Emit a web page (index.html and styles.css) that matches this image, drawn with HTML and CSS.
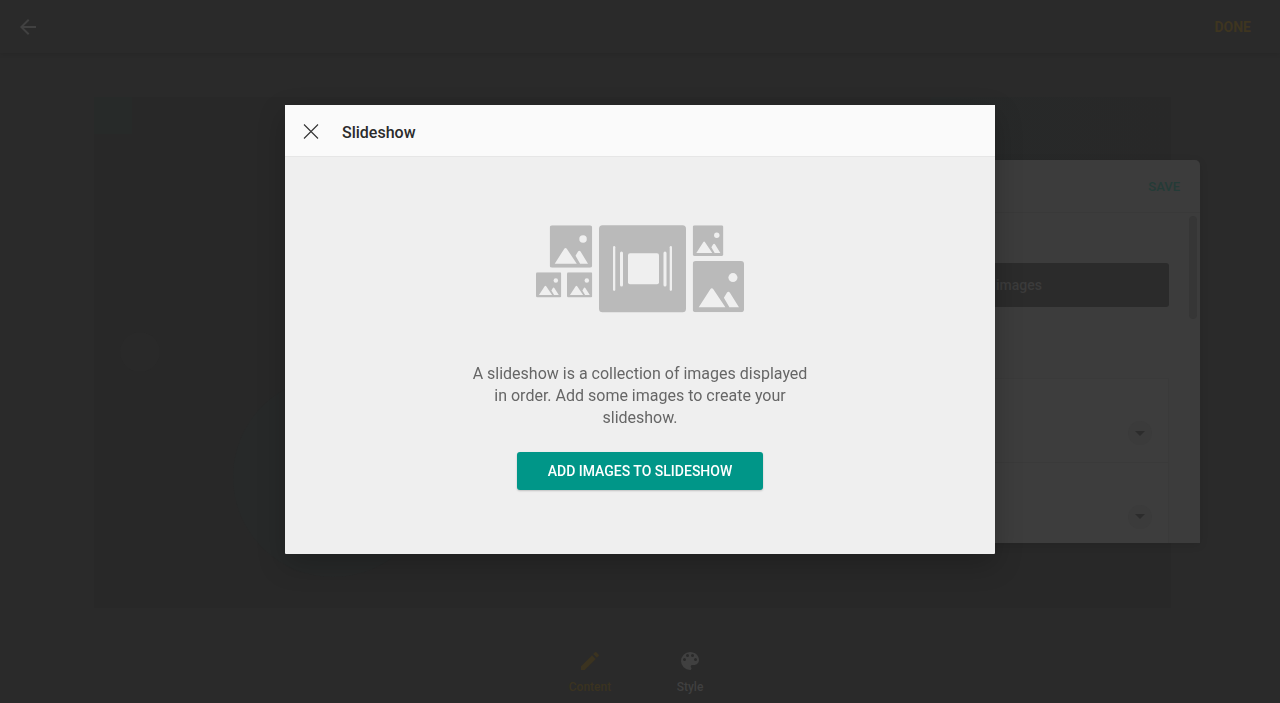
FILE: index.html
```html
<!DOCTYPE html>
<html lang="en">
<head>
<meta charset="utf-8">
<meta name="viewport" content="width=device-width, initial-scale=1">
<title>Slideshow</title>
<link rel="stylesheet" href="styles.css">
</head>
<body>
<div class="app">
  <header class="topbar">
    <button class="back" type="button" aria-label="Back">
      <svg width="24" height="24" viewBox="0 0 24 24" fill="currentColor"><path d="M20 11H7.8l5.6-5.6L12 4l-8 8 8 8 1.4-1.4L7.8 13H20z"/></svg>
    </button>
    <button class="done" type="button">DONE</button>
  </header>
  <main class="stage">
    <div class="canvas">
      <span class="canvas-tag"></span>
      <span class="canvas-glow"></span>
      <span class="canvas-prev"></span>
      <span class="canvas-disc"></span>
    </div>
  </main>
  <nav class="tabs">
    <button class="tab tab-active" type="button">
      <svg width="24" height="24" viewBox="0 0 24 24" fill="currentColor"><path d="M3 17.250V21h3.750L17.810 9.940l-3.750-3.750zM20.710 7.040a1 1 0 0 0 0-1.410l-2.340-2.340a1 1 0 0 0-1.410 0l-1.830 1.830 3.750 3.750z"/></svg>
      <span>Content</span>
    </button>
    <button class="tab" type="button">
      <svg width="24" height="24" viewBox="0 0 24 24" fill="currentColor"><path d="M12 3a9 9 0 0 0 0 18c.83 0 1.500-.67 1.500-1.500 0-.39-.15-.74-.39-1.010-.23-.26-.38-.61-.38-.99 0-.83.67-1.500 1.500-1.500H16c2.760 0 5-2.240 5-5 0-4.420-4.030-8-9-8zm-5.500 9a1.500 1.500 0 1 1 0-3 1.500 1.500 0 0 1 0 3zm3-4a1.500 1.500 0 1 1 0-3 1.500 1.500 0 0 1 0 3zm5 0a1.500 1.500 0 1 1 0-3 1.500 1.500 0 0 1 0 3zm3 4a1.500 1.500 0 1 1 0-3 1.500 1.500 0 0 1 0 3z"/></svg>
      <span>Style</span>
    </button>
  </nav>
</div>

<aside class="panel">
  <div class="panel-head"><button class="save" type="button">SAVE</button></div>
  <div class="panel-body">
    <div class="panel-content">
      <button class="images" type="button">images</button>
      <div class="options">
        <div class="option">
          <button class="expand" type="button" aria-label="Expand first option"><svg width="10" height="5" viewBox="0 0 10 5" fill="currentColor"><path d="M0 0h10L5 5z"/></svg></button>
        </div>
        <div class="option">
          <button class="expand" type="button" aria-label="Expand second option"><svg width="10" height="5" viewBox="0 0 10 5" fill="currentColor"><path d="M0 0h10L5 5z"/></svg></button>
        </div>
      </div>
    </div>
    <div class="scroll-track"><span class="scroll-thumb"></span></div>
  </div>
</aside>

<div class="overlay">
  <section class="dialog" role="dialog" aria-modal="true" aria-labelledby="dialog-title">
    <header class="dialog-head">
      <button class="close" type="button" aria-label="Close">
        <svg width="16" height="16" viewBox="0 0 16 16" fill="none" stroke="currentColor" stroke-width="1.100"><path d="M1 0.500l14 14M15 0.500L1 14.500"/></svg>
      </button>
      <h1 class="dialog-title" id="dialog-title">Slideshow</h1>
    </header>
    <div class="dialog-body">
      <svg class="art" width="208" height="88" viewBox="0 0 208 88" aria-hidden="true">
        <defs>
          <symbol id="photo" viewBox="0 0 51 51">
            <rect width="51" height="51" rx="3" fill="#bababa"/>
            <circle cx="40" cy="16.500" r="4.500" fill="#efefef"/>
            <path d="M6 46L17.500 28.200Q19 26 20.500 28.200L32.500 46zM31 36.500l3-5q1.500-1.800 3 0L46 46h-9.500z" fill="#efefef"/>
          </symbol>
        </defs>
        <use href="#photo" x="13.700" y="0.300" width="42.500" height="42.500"/>
        <use href="#photo" x="0" y="47.300" width="25.300" height="25.300"/>
        <use href="#photo" x="31" y="47.300" width="25.300" height="25.300"/>
        <rect x="63" y="0.300" width="87" height="87" rx="3.500" fill="#bababa"/>
        <g fill="#efefef">
          <rect x="77" y="21" width="2.300" height="45" rx="1.150"/>
          <rect x="84" y="26.500" width="3" height="35" rx="1.500"/>
          <rect x="92" y="28.300" width="31" height="31" rx="2"/>
          <rect x="127.500" y="26.500" width="3" height="35" rx="1.500"/>
          <rect x="133.700" y="21" width="2.300" height="45" rx="1.150"/>
        </g>
        <use href="#photo" x="156.700" y="0.300" width="30.700" height="30.700"/>
        <use href="#photo" x="156.700" y="36" width="51.300" height="51.300"/>
      </svg>
      <p class="message">A slideshow is a collection of images displayed in order. Add some images to create your slideshow.</p>
      <button class="add" type="button">ADD IMAGES TO SLIDESHOW</button>
    </div>
  </section>
</div>
</body>
</html>
```
FILE: styles.css
```css
* { box-sizing: border-box; }

body {
  margin: 0;
  background: #2a2a2a;
  font-family: Roboto, "Liberation Sans", sans-serif;
}

button {
  margin: 0;
  padding: 0;
  border: 0;
  background: none;
  color: inherit;
  font: inherit;
}

svg { display: block; }

.app {
  display: flex;
  flex-direction: column;
  height: 100vh;
}

.topbar {
  display: flex;
  align-items: center;
  justify-content: space-between;
  height: 53px;
  padding: 0 29px 0 16px;
  box-shadow: 0 1px 3px #272727;
}

.back { color: #414141; }

.done {
  color: #3e3520;
  font-size: 14px;
  font-weight: 700;
}

.stage {
  flex: 1;
  display: flex;
  padding: 44px 109px 34px 94px;
}

.canvas {
  position: relative;
  flex: 1;
  overflow: hidden;
  background: #282828;
}

.canvas-tag,
.canvas-glow,
.canvas-prev,
.canvas-disc { position: absolute; }

.canvas-tag {
  top: 0;
  left: 0;
  width: 38px;
  height: 37px;
  background: #272a29;
}

.canvas-glow {
  top: 0;
  right: 0;
  width: 240px;
  height: 64px;
  background: linear-gradient(to right, #272929, #282828);
}

.canvas-prev {
  top: 235px;
  left: 26px;
  width: 40px;
  height: 40px;
  border-radius: 50%;
  background: #292929;
}

.canvas-disc {
  top: 280px;
  left: 139px;
  width: 200px;
  height: 200px;
  border-radius: 50%;
  background: #272929;
}

.tabs {
  display: flex;
  justify-content: center;
  height: 61px;
  padding-top: 7px;
}

.tab {
  display: flex;
  flex-direction: column;
  align-items: center;
  gap: 7px;
  width: 100px;
  color: #404040;
  font-size: 12px;
  line-height: 14px;
  font-weight: 500;
}

.tab-active { color: #3b3320; }

.panel {
  position: absolute;
  top: 160px;
  right: 80px;
  display: flex;
  flex-direction: column;
  width: 400px;
  height: 383px;
  border-radius: 5px 5px 0 0;
  background: #3c3c3c;
  box-shadow: 0 2px 8px rgba(0, 0, 0, 0.1);
}

.panel-head {
  display: flex;
  align-items: center;
  justify-content: flex-end;
  height: 53px;
  padding-right: 20px;
  border-bottom: 1px solid #393939;
}

.save {
  color: #243b37;
  font-size: 13px;
  font-weight: 500;
}

.panel-body {
  flex: 1;
  display: flex;
  min-height: 0;
}

.panel-content {
  flex: 1;
  display: flex;
  flex-direction: column;
  padding: 50px 20px 0 31px;
}

.images {
  flex: none;
  height: 44px;
  padding-right: 127px;
  border-radius: 3px;
  background: #2b2b2b;
  color: #3b3b3b;
  font-size: 14px;
  font-weight: 500;
  text-align: right;
}

.options {
  flex: 1;
  min-height: 0;
  margin-top: 71px;
  overflow: hidden;
  border: 1px solid #3a3a3a;
  border-bottom: 0;
  background: #3d3d3d;
}

.option {
  display: flex;
  align-items: center;
  justify-content: flex-end;
  height: 83px;
  padding: 25px 16px 0 0;
}

.option + .option { border-top: 1px solid #3a3a3a; }

.expand {
  display: flex;
  align-items: center;
  justify-content: center;
  width: 24px;
  height: 24px;
  border-radius: 50%;
  background: #3b3b3b;
  color: #2c2c2c;
}

.scroll-track {
  width: 11px;
  padding-top: 3px;
}

.scroll-thumb {
  display: block;
  width: 8px;
  height: 103px;
  border-radius: 4px;
  background: #363636;
}

.overlay {
  position: fixed;
  inset: 0;
  display: flex;
  justify-content: center;
  align-items: flex-start;
  padding-top: 105px;
}

.dialog {
  width: 710px;
  max-width: 100%;
  background: #efefef;
  border-radius: 1px;
  box-shadow: 0 10px 28px rgba(0, 0, 0, 0.22);
}

.dialog-head {
  display: flex;
  align-items: center;
  gap: 23px;
  height: 52px;
  padding: 3px 18px 0;
  border-bottom: 1px solid #e6e6e6;
  background: #fafafa;
}

.close { color: #333; }

.dialog-title {
  margin: 0;
  color: #2b2b2b;
  font-size: 16px;
  font-weight: 500;
}

.dialog-body {
  display: flex;
  flex-direction: column;
  align-items: center;
  padding: 68px 24px 64px;
}

.message {
  width: 340px;
  margin: 50px 0 23px;
  color: #666;
  font-size: 16px;
  line-height: 22px;
  text-align: center;
}

.add {
  width: 246px;
  height: 38px;
  border-radius: 3px;
  background: #009688;
  color: #fff;
  font-size: 14px;
  font-weight: 500;
  box-shadow: 0 1px 2px rgba(0, 0, 0, 0.2);
}
```
